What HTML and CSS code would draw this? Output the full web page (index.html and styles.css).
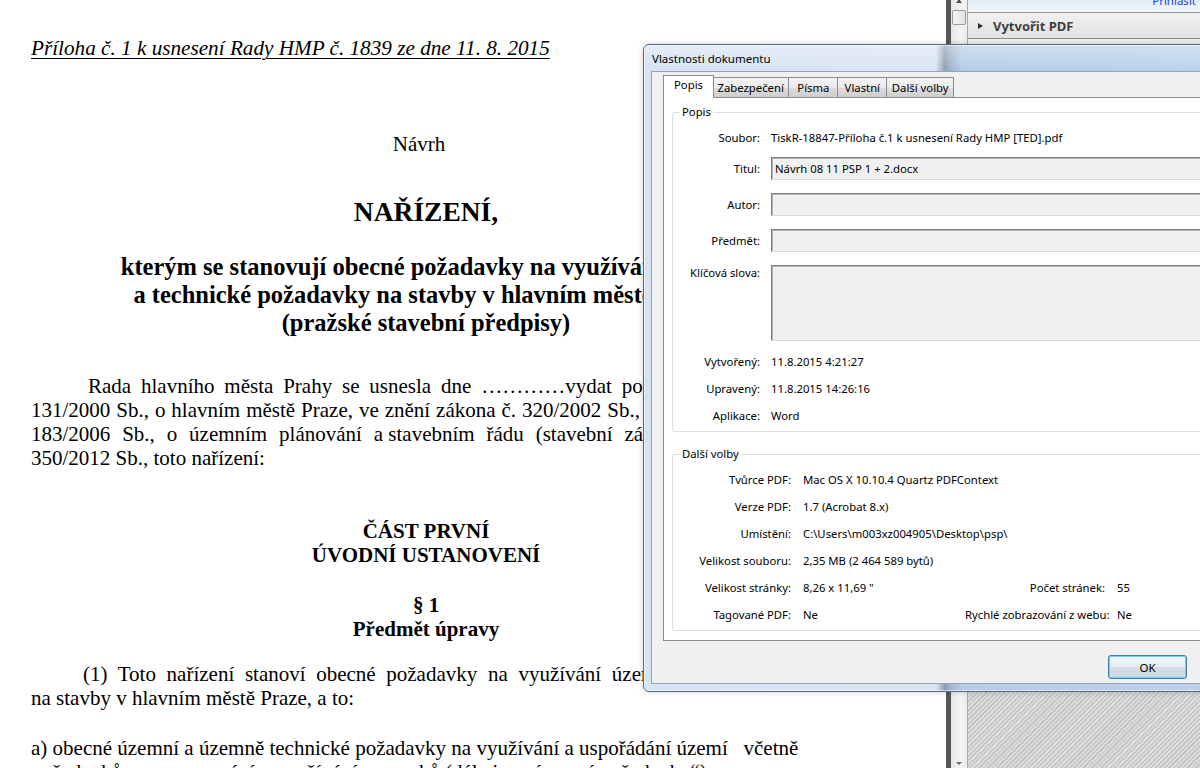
FILE: index.html
```html
<!DOCTYPE html>
<html lang="cs">
<head>
<meta charset="utf-8">
<title>Vlastnosti dokumentu</title>
<link rel="stylesheet" href="styles.css">
</head>
<body>
<div class="screen">
  <main class="doc">
    <div class="page">
      <p class="annex">Příloha č. 1 k usnesení Rady HMP č. 1839 ze dne 11. 8. 2015</p>
      <p class="draft">Návrh</p>
      <h1 class="title">NAŘÍZENÍ,</h1>
      <h2 class="subtitle">kterým se stanovují obecné požadavky na využívání území<br>a technické požadavky na stavby v hlavním městě Praze<br>(pražské stavební předpisy)</h2>
      <div class="para rada">
        <div class="ln first ws-a">Rada hlavního města Prahy se usnesla dne …………vydat podle § 44 odst. 3</div>
        <div class="ln ws-b">131/2000 Sb., o hlavním městě Praze, ve znění zákona č. 320/2002 Sb., a podle</div>
        <div class="ln ws-c">183/2006 Sb., o územním plánování <span class="tight">a stavebním</span> řádu (stavební zákon), ve znění</div>
        <div class="ln">350/2012 Sb., toto nařízení:</div>
      </div>
      <h3 class="part">ČÁST PRVNÍ<br>ÚVODNÍ USTANOVENÍ</h3>
      <h3 class="sect">§ 1<br>Předmět úpravy</h3>
      <div class="para scope">
        <div class="ln first ws-d">(1) Toto nařízení stanoví obecné požadavky na využívání území a technické</div>
        <div class="ln">na stavby v hlavním městě Praze, a to:</div>
      </div>
      <div class="para item">
        <div class="ln pre">a) obecné územní a územně technické požadavky na využívání a uspořádání území   včetně</div>
        <div class="ln">požadavků na vymezování a využívání pozemků (dále jen „územní požadavky“),</div>
      </div>
    </div>
  </main>

  <div class="vsplit"></div>

  <div class="vscroll">
    <div class="sb-btn sb-up"><span class="tri-up"></span></div>
    <div class="sb-thumb"></div>
    <div class="sb-track"></div>
    <div class="sb-btn sb-down"><span class="tri-down"></span></div>
  </div>

  <aside class="tools">
    <div class="signin"><a href="#">Přihlásit</a></div>
    <div class="tp-head"><span class="tri-right"></span><span>Vytvořit PDF</span></div>
    <div class="tp-head"><span class="tri-right"></span><span>Upravit PDF</span></div>
    <div class="hatch"></div>
  </aside>

  <section class="dialog">
    <header class="dlg-title">Vlastnosti dokumentu</header>
    <div class="dlg-client">
      <nav class="tabs">
        <span class="tab active">Popis</span>
        <span class="tab">Zabezpečení</span>
        <span class="tab">Písma</span>
        <span class="tab">Vlastní</span>
        <span class="tab">Další volby</span>
      </nav>
      <div class="tabpage">
        <fieldset class="group g-popis">
          <legend>Popis</legend>
          <div class="row r-soubor"><span class="lbl">Soubor:</span><span class="val">TiskR-18847-Příloha č.1 k usnesení Rady HMP [TED].pdf</span></div>
          <div class="row r-field"><span class="lbl">Titul:</span><span class="field">Návrh 08 11 PSP 1 + 2.docx</span></div>
          <div class="row r-field gap"><span class="lbl">Autor:</span><span class="field"></span></div>
          <div class="row r-field gap"><span class="lbl">Předmět:</span><span class="field"></span></div>
          <div class="row r-keys"><span class="lbl">Klíčová slova:</span><span class="field area"></span></div>
          <div class="row r-info first"><span class="lbl">Vytvořený:</span><span class="val">11.8.2015 4:21:27</span></div>
          <div class="row r-info"><span class="lbl">Upravený:</span><span class="val">11.8.2015 14:26:16</span></div>
          <div class="row r-info"><span class="lbl">Aplikace:</span><span class="val">Word</span></div>
        </fieldset>
        <fieldset class="group g-more">
          <legend>Další volby</legend>
          <div class="more-grid">
            <span class="lbl">Tvůrce PDF:</span><span class="val wide">Mac OS X 10.10.4 Quartz PDFContext</span>
            <span class="lbl">Verze PDF:</span><span class="val wide">1.7 (Acrobat 8.x)</span>
            <span class="lbl">Umístění:</span><span class="val wide">C:\Users\m003xz004905\Desktop\psp\</span>
            <span class="lbl">Velikost souboru:</span><span class="val wide">2,35 MB (2 464 589 bytů)</span>
            <span class="lbl">Velikost stránky:</span><span class="val">8,26 x 11,69 "</span><span class="lbl">Počet stránek:</span><span class="val">55</span>
            <span class="lbl">Tagované PDF:</span><span class="val">Ne</span><span class="lbl">Rychlé zobrazování z webu:</span><span class="val">Ne</span>
          </div>
        </fieldset>
      </div>
      <div class="buttons">
        <button class="btn default">OK</button>
        <button class="btn">Storno</button>
      </div>
    </div>
  </section>
</div>
</body>
</html>
```

FILE: styles.css
```css
* { box-sizing: border-box; margin: 0; padding: 0; }

html, body {
  width: 1200px;
  height: 768px;
  overflow: hidden;
  background: #fff;
}

.screen {
  position: relative;
  display: flex;
  width: 1200px;
  height: 768px;
  overflow: hidden;
}

/* ---------- PDF page ---------- */
.doc {
  width: 946px;
  flex: none;
  background: #fff;
  overflow: hidden;
  font-family: "Liberation Serif", "Times New Roman", serif;
  color: #000;
  font-size: 21px;
  line-height: 24px;
}

.page {
  width: 790px;
  margin-left: 31px;
  padding-top: 36px;
}

.annex {
  font-style: italic;
  font-size: 21.2px;
  text-decoration: underline;
  text-decoration-thickness: 1px;
  text-underline-offset: 3px;
  white-space: nowrap;
}

.draft {
  margin-top: 72px;
  padding-right: 14px;
  text-align: center;
}

.title {
  margin-top: 40px;
  font-size: 27.5px;
  line-height: 32px;
  font-weight: bold;
  text-align: center;
}

.subtitle {
  margin-top: 25px;
  font-size: 24.5px;
  line-height: 28px;
  font-weight: bold;
  text-align: center;
}

.ln { white-space: nowrap; }
.ln.pre { white-space: pre; }

.ws-a { word-spacing: 4.6px; }
.ws-b { word-spacing: 0.7px; }
.ws-c { word-spacing: 6.6px; }
.ws-d { word-spacing: 5.4px; }
.tight { word-spacing: 0; }

.rada { margin-top: 37px; }
.rada .first { padding-left: 57px; }

.part,
.sect {
  font-size: 21px;
  line-height: 24px;
  font-weight: bold;
  text-align: center;
}

.part { margin-top: 49px; }
.sect { margin-top: 26px; }

.scope { margin-top: 21px; }
.scope .first { padding-left: 52px; }

.item { margin-top: 26px; }

/* ---------- splitter + scrollbar ---------- */
.vsplit {
  width: 5px;
  flex: none;
  background: #575757;
}

.vscroll {
  width: 17px;
  flex: none;
  display: flex;
  flex-direction: column;
  background: linear-gradient(to right, #e6e6e6, #f4f4f4 60%, #ececec);
  border-right: 1px solid #a9a9a9;
}

.sb-btn {
  height: 9px;
  display: flex;
  justify-content: center;
}

.sb-up { align-items: flex-start; }
.sb-down { align-items: center; }

.tri-up {
  width: 0;
  height: 0;
  margin-top: -1px;
  border-left: 3px solid transparent;
  border-right: 3px solid transparent;
  border-bottom: 4px solid #4a4a4a;
}

.tri-down {
  width: 0;
  height: 0;
  border-left: 3px solid transparent;
  border-right: 3px solid transparent;
  border-top: 3px solid #6a6a6a;
}

.sb-thumb {
  height: 15px;
  margin: 1px 1px 0 1px;
  border: 1px solid #9c9c9c;
  border-radius: 2px;
  background: linear-gradient(to right, #f4f4f4, #e2e2e2);
}

.sb-track { flex: 1; }

/* ---------- tools pane ---------- */
.tools {
  flex: 1;
  display: flex;
  flex-direction: column;
  font-family: "Noto Sans", "Open Sans", sans-serif;
}

.signin {
  height: 13px;
  overflow: hidden;
  text-align: right;
  padding-right: 4px;
  background: linear-gradient(#e3ebf6, #f1f6fc);
  border-bottom: 1px solid #9b9b9b;
}

.signin a {
  display: block;
  margin-top: -6px;
  font-size: 11.5px;
  line-height: 14px;
  color: #2343e0;
  text-decoration: none;
}

.tp-head {
  height: 26px;
  display: flex;
  align-items: center;
  gap: 10px;
  padding-left: 10px;
  background: linear-gradient(#f1f1f1, #e1e1e1);
  border-bottom: 1px solid #8c8c8c;
  font-size: 13px;
  font-weight: bold;
  color: #3f3f3f;
}

.tri-right {
  width: 0;
  height: 0;
  border-top: 3.5px solid transparent;
  border-bottom: 3.5px solid transparent;
  border-left: 5px solid #2e2e2e;
}

.hatch {
  flex: 1;
  background: repeating-linear-gradient(135deg, #dedede 0 1.6px, #c6c6c6 1.6px 3.2px);
}

/* ---------- dialog ---------- */
.dialog {
  position: absolute;
  left: 643px;
  top: 44px;
  width: 659px;
  height: 648px;
  display: flex;
  flex-direction: column;
  padding: 0 7px 7px;
  border: 1px solid #58697f;
  border-radius: 6px;
  background:
    linear-gradient(to bottom, rgba(255,255,255,0.35), rgba(255,255,255,0) 26px),
    linear-gradient(to right, #d6e3f2 0, #d9e5f3 292px, #8e9cae 301px, #9fb4cc 306px, #b6cde7 318px, #bcd3ec 100%);
  box-shadow: inset 0 0 0 1px rgba(255,255,255,0.55), 0 0 6px rgba(0,0,0,0.18);
  font-family: "Noto Sans", "Open Sans", sans-serif;
  font-size: 11.3px;
  color: #000;
}

.dlg-title {
  height: 26px;
  flex: none;
  display: flex;
  align-items: center;
  padding-left: 1px;
  padding-top: 1px;
  font-size: 11.5px;
  color: #000;
}

.dlg-client {
  flex: 1;
  display: flex;
  flex-direction: column;
  padding: 3px 11px 0;
  background: #f0f0f0;
  border: 1px solid #94a5ba;
}

.tabs {
  height: 22px;
  flex: none;
  display: flex;
  align-items: flex-end;
  position: relative;
  z-index: 2;
}

.tab {
  height: 20px;
  min-width: 50px;
  padding: 0 4.5px;
  margin-left: -1px;
  text-align: center;
  line-height: 19px;
  border: 1px solid #898c95;
  border-bottom: none;
  background: linear-gradient(#f3f3f3, #ebebeb 50%, #dddddd 50%, #cfcfcf);
  white-space: nowrap;
}

.tab.active {
  height: 23px;
  min-width: 51px;
  margin-left: 0;
  margin-right: -1px;
  margin-bottom: -1px;
  position: relative;
  z-index: 3;
  line-height: 18px;
  background: #fff;
}

.tabpage {
  height: 544px;
  flex: none;
  padding: 6px 8px 0;
  background: #fff;
  border: 1px solid #898c95;
}

.group {
  border: 1px solid #d5dfe5;
  border-radius: 3px;
  padding: 0 8px 2px 7px;
  margin: 0;
  min-width: 0;
}

.group legend {
  padding: 0 2px;
  line-height: 16px;
}

.row {
  display: grid;
  grid-template-columns: 80px 1fr;
  column-gap: 11px;
  align-items: center;
}

.lbl {
  text-align: right;
  white-space: nowrap;
}

.val { white-space: nowrap; }

.r-soubor {
  height: 23px;
  margin-top: 6px;
}

.r-field {
  height: 23px;
  margin-top: 8px;
}

.r-field.gap { margin-top: 13px; }

.r-keys {
  height: 76px;
  margin-top: 13px;
  align-items: start;
}

.r-keys .lbl { line-height: 16px; }

.field {
  display: block;
  height: 23px;
  padding: 0 3px;
  line-height: 21px;
  background: #f0f0f0;
  border: 1px solid;
  border-color: #7e7e7e #d9d9d9 #d9d9d9 #7e7e7e;
  box-shadow: inset 1px 1px 0 #b4b4b4;
  white-space: nowrap;
}

.field.area { height: 76px; }

.r-info { height: 27px; }
.r-info.first { margin-top: 7px; }

.g-more { margin-top: 14px; }

.more-grid {
  display: grid;
  grid-template-columns: 111px 150px 140px 1fr;
  grid-auto-rows: 27px;
  column-gap: 12px;
  align-items: center;
  margin-top: 4px;
}

.more-grid .wide { grid-column: 2 / -1; }

.buttons {
  display: flex;
  justify-content: flex-end;
  gap: 16px;
  padding-top: 14px;
}

.btn {
  width: 79px;
  height: 24px;
  font-family: inherit;
  font-size: 11.5px;
  color: #000;
  border: 1px solid #707070;
  border-radius: 3px;
  background: linear-gradient(#f2f2f2, #ebebeb 48%, #dddddd 52%, #cfcfcf);
}

.btn.default {
  border-color: #3c7fb1;
  box-shadow: inset 0 0 0 1px #6fd2f4;
  background: linear-gradient(#f2f6f9, #e7edf2 48%, #d6dfe6 52%, #c9d4dd);
}
```
